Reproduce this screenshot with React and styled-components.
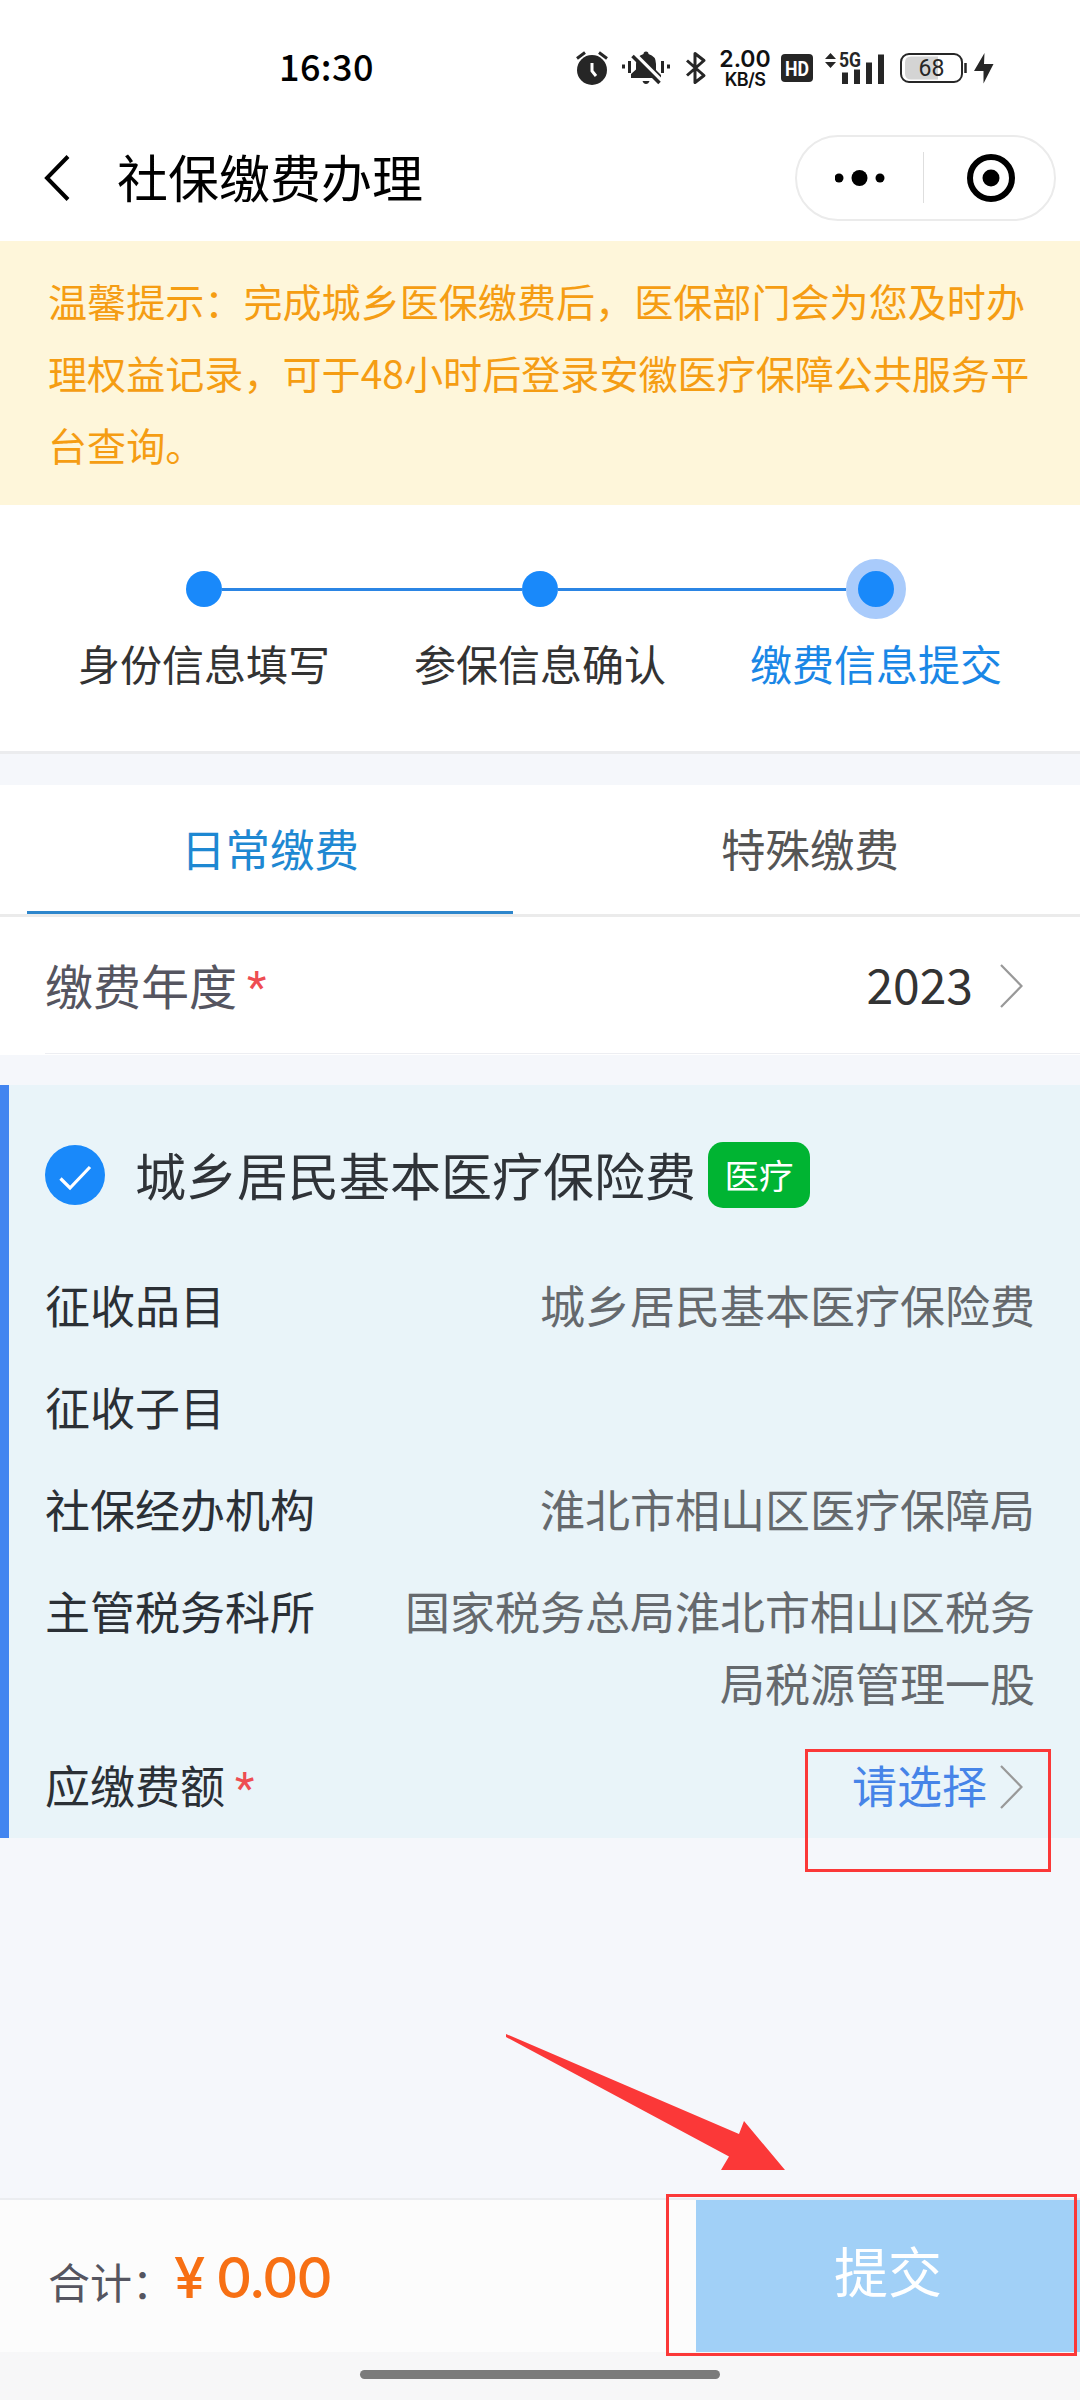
import React from 'react'
import styled, { createGlobalStyle } from 'styled-components'

const GlobalStyle = createGlobalStyle`
  * {
    box-sizing: border-box;
  }
  body {
    margin: 0;
    background: #f5f7fa;
    font-family: 'Noto Sans CJK SC', sans-serif;
    color: #333;
  }
  svg {
    display: block;
    flex: none;
  }
`

const Screen = styled.div`
  position: relative;
  display: flex;
  flex-direction: column;
  width: 1080px;
  height: 2400px;
  overflow: hidden;
  background: #f5f7fb;
`

const StatusBar = styled.div`
  display: flex;
  align-items: center;
  height: 136px;
  padding: 0 86px 0 279px;
  background: #fff;
`

const Clock = styled.div`
  padding-bottom: 6px;
  font-size: 36px;
  line-height: 36px;
  font-weight: 500;
  letter-spacing: 0.4px;
  color: #000;
`

const StatusIcons = styled.div`
  display: flex;
  align-items: center;
  margin-left: auto;
`

const NetSpeed = styled.div`
  display: flex;
  flex-direction: column;
  align-items: center;
  width: 54px;
  margin: 0 9px 0 11px;
  padding-top: 2px;
  color: #111;
  font-family: Inter, sans-serif;
  font-weight: 600;
  font-size: 23px;
  line-height: 21px;
  small {
    font-size: 18px;
    line-height: 20px;
    letter-spacing: -0.6px;
  }
`

const NavBar = styled.div`
  display: flex;
  align-items: center;
  height: 105px;
  padding: 0 24px 22px 43px;
  background: #fff;
`

const NavTitle = styled.div`
  margin-left: 46px;
  padding-bottom: 4px;
  font-size: 51px;
  line-height: 60px;
  color: #000;
`

const Capsule = styled.div`
  display: flex;
  align-items: center;
  width: 261px;
  height: 86px;
  margin-left: auto;
  border: 2px solid #ebebeb;
  border-radius: 43px;
`

const CapsuleHalf = styled.div`
  display: flex;
  flex: 1;
  align-items: center;
  justify-content: center;
  padding-left: ${p => p.$shift || 0}px;
`

const CapsuleDivider = styled.div`
  width: 1px;
  height: 51px;
  background: #dedede;
`

const Notice = styled.div`
  height: 264px;
  padding: 23px 0 0 48px;
  background: #fef6da;
  color: #f59d13;
  font-size: 39.1px;
  line-height: 72px;
  white-space: pre;
`

const Steps = styled.div`
  display: flex;
  height: 249px;
  padding: 54px 36px 0;
  background: #fff;
  border-bottom: 3px solid #ebecee;
`

const Step = styled.div`
  display: flex;
  flex: 1;
  flex-direction: column;
  align-items: center;
  font-size: 42px;
  line-height: 60px;
  color: ${p => (p.$active ? '#1a87e6' : '#333')};
`

const StepTrack = styled.div`
  display: flex;
  align-items: center;
  align-self: stretch;
  height: 60px;
  margin-bottom: 14px;
`

const StepLine = styled.div`
  flex: 1;
  height: 3px;
  background: ${p => (p.$hidden ? 'transparent' : '#2b85e4')};
`

const StepDot = styled.div`
  width: ${p => (p.$active ? 60 : 36)}px;
  height: ${p => (p.$active ? 60 : 36)}px;
  border: ${p => (p.$active ? '12px solid #a9cbfb' : 'none')};
  border-radius: 50%;
  background: #1989fa;
`

const Tabs = styled.div`
  display: flex;
  height: 132px;
  margin-top: 31px;
  background: #fff;
  border-bottom: 3px solid #ebebeb;
`

const Tab = styled.div`
  display: flex;
  flex: 1;
  flex-direction: column;
  align-items: center;
  padding: 33px 27px 0;
  font-size: 44.5px;
  line-height: 60px;
  color: ${p => (p.$active ? '#1e88d2' : '#555')};
  &::after {
    content: '';
    align-self: stretch;
    height: 3px;
    margin-top: auto;
    background: ${p => (p.$active ? '#2d86cc' : 'transparent')};
  }
`

const YearRow = styled.div`
  display: flex;
  align-items: center;
  height: 138px;
  padding: 0 57px 0 45px;
  background: linear-gradient(#edeef2, #edeef2) 45px 136px / 100% 1px no-repeat #fff;
  font-size: 48px;
  line-height: 60px;
  color: #555560;
`

const YearLabel = styled.span`
  padding-bottom: 4px;
`

const YearValue = styled.span`
  margin: 0 27px 0 auto;
  padding-bottom: 6px;
  color: #333;
`

const Required = styled.span`
  margin-left: 10px;
  padding-top: 3px;
  font-family: Roboto, sans-serif;
  font-size: 45px;
  color: #ee4d52;
`

const Card = styled.div`
  height: 753px;
  margin-top: 30px;
  padding-left: 36px;
  border-left: 9px solid #4285f0;
  background: #e9f4f9;
`

const CardHead = styled.div`
  display: flex;
  align-items: center;
  height: 184px;
  padding-bottom: 4px;
`

const CardTitle = styled.div`
  margin: 0 12px 0 30px;
  padding-bottom: 3px;
  font-size: 51px;
  line-height: 60px;
  color: #2f3338;
`

const Tag = styled.div`
  width: 102px;
  height: 66px;
  border-radius: 15px;
  background: #00b432;
  color: #fff;
  font-size: 34.5px;
  line-height: 65px;
  text-align: center;
`

const Field = styled.div`
  display: flex;
  align-items: flex-start;
  justify-content: space-between;
  padding-right: ${p => (p.$link ? 57 : 45)}px;
  margin-bottom: 30px;
  font-size: 45px;
  line-height: 72px;
  color: #2b3036;
`

const FieldValue = styled.div`
  width: 640px;
  min-height: 72px;
  color: #65696d;
  text-align: right;
`

const Picker = styled.div`
  display: flex;
  align-items: center;
  gap: 13px;
  color: #4684e8;
  svg {
    margin-top: 3px;
  }
`

const Footer = styled.div`
  display: flex;
  align-items: center;
  height: 154px;
  margin-top: auto;
  border-top: 2px solid #ebedf0;
  background: #fcfcfc;
`

const TotalLabel = styled.div`
  padding: 9px 0 0 48px;
  font-size: 42px;
  line-height: 60px;
  color: #555560;
`

const TotalPrice = styled.div`
  padding-top: 3px;
  font-family: Inter, sans-serif;
  font-size: 56px;
  line-height: 60px;
  font-weight: 500;
  letter-spacing: -2px;
  color: #f77014;
`

const SubmitButton = styled.button`
  width: 384px;
  height: 152px;
  margin-left: auto;
  padding: 0 0 13px;
  border: 0;
  background: #a1d0f7;
  color: #fff;
  font: 54px / 60px 'Noto Sans CJK SC', sans-serif;
`

const HomeArea = styled.div`
  height: 48px;
  padding-top: 18px;
  background: #f7f7f8;
`

const HomeBar = styled.div`
  width: 360px;
  height: 9px;
  margin: 0 auto;
  border-radius: 5px;
  background: #7b7b7b;
`

// hand-drawn marks lying over the page
const MarkBox = styled.div`
  position: absolute;
  left: ${p => p.$x}px;
  top: ${p => p.$y}px;
  width: ${p => p.$w}px;
  height: ${p => p.$h}px;
  border: 3px solid #fb3838;
`

const MarkArrow = styled.svg`
  position: absolute;
  left: 506px;
  top: 2034px;
`

const MuteSvg = styled.svg`
  margin-left: 13px;
`

const BluetoothSvg = styled.svg`
  margin-left: 14px;
`

const SignalSvg = styled.svg`
  margin-left: 11px;
`

const BatterySvg = styled.svg`
  margin-left: 14px;
`

const BoltSvg = styled.svg`
  margin-left: 6px;
`

const ink = '#262626'

const AlarmIcon = () => (
  <svg width="32" height="36" viewBox="0 0 32 36">
    <circle cx="16" cy="20" r="15" fill={ink} />
    <path d="M1 8.500 9 2.500M31 8.500 23 2.500" stroke={ink} strokeWidth="3" />
    <path d="M16 13v8l4 5" fill="none" stroke="#fff" strokeWidth="3" />
  </svg>
)

const MuteIcon = () => (
  <MuteSvg width="50" height="36" viewBox="0 0 50 36">
    <path d="M1 14.500h3v4H1zM7 11h3v12H7zM40 11h3v12h-3zM46 14.500h3v4h-3z" fill={ink} />
    <path d="M22.500 4q0-2.500 2.500-2.500T27.500 4q7.500 2 7.500 10v6l5 5v3H10v-4l5-4.500V14q0-8 7.500-10zM21.500 31h7q-1 3-3.500 3t-3.500-3z" fill={ink} />
    <path d="M13.500 3.500 42 32" stroke="#fff" strokeWidth="3.500" />
    <path d="M11.500 6 38.500 33" stroke={ink} strokeWidth="3.500" />
  </MuteSvg>
)

const BluetoothIcon = () => (
  <BluetoothSvg width="22" height="36" viewBox="0 0 22 36">
    <path d="M2 10.500 19 25.500 10 32.500V3.500l9 7L2 25.500" fill="none" stroke={ink} strokeWidth="3" strokeLinejoin="round" />
  </BluetoothSvg>
)

const HdIcon = () => (
  <svg width="32" height="28" viewBox="0 0 32 28">
    <rect width="32" height="28" rx="4" fill={ink} />
    <text x="16" y="21.500" textAnchor="middle" textLength="24" lengthAdjust="spacingAndGlyphs" fontFamily="Roboto" fontWeight="700" fontSize="21" fill="#fff">HD</text>
  </svg>
)

const SignalIcon = () => (
  <SignalSvg width="62" height="48" viewBox="0 -6 62 48">
    <path d="M1 9 6.500 3 12 9zM1 12h11l-5.500 6z" fill={ink} />
    <text x="15" y="17" textLength="22" lengthAdjust="spacingAndGlyphs" fontFamily="Roboto" fontWeight="700" fontSize="20" fill={ink}>5G</text>
    <path d="M18 22.500h6V34h-6zM30 19.500h6V34h-6zM42 12.500h6V34h-6zM54 4.500h6V34h-6z" fill={ink} />
  </SignalSvg>
)

const BatteryIcon = () => (
  <BatterySvg width="68" height="36" viewBox="0 0 68 36">
    <rect x="1" y="4" width="61" height="28" rx="8" fill="#fff" stroke={ink} strokeWidth="2" />
    <path d="M11 6.500h27v23H11q-6 0-6-6v-11q0-6 6-6z" fill="#d4d4d4" />
    <path d="M65.500 13v10" stroke={ink} strokeWidth="2.500" />
    <text x="31.500" y="26" textAnchor="middle" fontFamily="Roboto" fontSize="23" fill={ink}>68</text>
  </BatterySvg>
)

const BoltIcon = () => (
  <BoltSvg width="20" height="36" viewBox="0 0 20 36">
    <path d="M10.500 3 0 21h9.500v12.500L19.500 14H10z" fill={ink} />
  </BoltSvg>
)

const Chevron = () => (
  <svg width="23" height="44" viewBox="0 0 23 44">
    <path d="M1 1 21.500 22 1 43" fill="none" stroke="#999" strokeWidth="2.200" />
  </svg>
)

const fields = [
  ['征收品目', '城乡居民基本医疗保险费'],
  ['征收子目', ''],
  ['社保经办机构', '淮北市相山区医疗保障局'],
  ['主管税务科所', '国家税务总局淮北市相山区税务局税源管理一股']
]

const steps = ['身份信息填写', '参保信息确认', '缴费信息提交']

export default function App () {
  return (
    <Screen>
      <GlobalStyle />
      <StatusBar>
        <Clock>16:30</Clock>
        <StatusIcons>
          <AlarmIcon />
          <MuteIcon />
          <BluetoothIcon />
          <NetSpeed>2.00<small>KB/S</small></NetSpeed>
          <HdIcon />
          <SignalIcon />
          <BatteryIcon />
          <BoltIcon />
        </StatusIcons>
      </StatusBar>

      <NavBar>
        <svg width="28" height="48" viewBox="0 0 28 48">
          <path d="M25 2.500 4 24l21 21.500" fill="none" stroke="#000" strokeWidth="4" />
        </svg>
        <NavTitle>社保缴费办理</NavTitle>
        <Capsule>
          <CapsuleHalf>
            <svg width="50" height="16" viewBox="0 0 50 16">
              <circle cx="4" cy="8" r="4.500" />
              <circle cx="24.500" cy="8" r="8" />
              <circle cx="45" cy="8" r="4.500" />
            </svg>
          </CapsuleHalf>
          <CapsuleDivider />
          <CapsuleHalf $shift={5}>
            <svg width="48" height="48" viewBox="0 0 48 48">
              <circle cx="24" cy="24" r="21" fill="none" stroke="#000" strokeWidth="6" />
              <circle cx="24" cy="24" r="8.500" />
            </svg>
          </CapsuleHalf>
        </Capsule>
      </NavBar>

      <Notice>
        {'温馨提示：完成城乡医保缴费后，医保部门会为您及时办\n理权益记录，可于48小时后登录安徽医疗保障公共服务平\n台查询。'}
      </Notice>

      <Steps>
        {steps.map((name, i) => (
          <Step key={name} $active={i === 2}>
            <StepTrack>
              <StepLine $hidden={i === 0} />
              <StepDot $active={i === 2} />
              <StepLine $hidden={i === 2} />
            </StepTrack>
            {name}
          </Step>
        ))}
      </Steps>

      <Tabs>
        <Tab $active>日常缴费</Tab>
        <Tab>特殊缴费</Tab>
      </Tabs>

      <YearRow>
        <YearLabel>缴费年度</YearLabel>
        <Required>*</Required>
        <YearValue>2023</YearValue>
        <Chevron />
      </YearRow>

      <Card>
        <CardHead>
          <svg width="60" height="60" viewBox="0 0 60 60">
            <circle cx="30" cy="30" r="30" fill="#1989fa" />
            <path d="M15.500 33.500 25 43 45 22" fill="none" stroke="#fff" strokeWidth="3.200" />
          </svg>
          <CardTitle>城乡居民基本医疗保险费</CardTitle>
          <Tag>医疗</Tag>
        </CardHead>
        {fields.map(([label, value]) => (
          <Field key={label}>
            {label}
            <FieldValue>{value}</FieldValue>
          </Field>
        ))}
        <Field $link>
          <div>应缴费额<Required>*</Required></div>
          <Picker>请选择<Chevron /></Picker>
        </Field>
      </Card>

      <Footer>
        <TotalLabel>合计：</TotalLabel>
        <TotalPrice>¥ 0.00</TotalPrice>
        <SubmitButton>提交</SubmitButton>
      </Footer>
      <HomeArea>
        <HomeBar />
      </HomeArea>

      <MarkBox $x={805} $y={1749} $w={246} $h={123} />
      <MarkBox $x={666} $y={2194} $w={411} $h={162} />
      <MarkArrow width="280" height="137" viewBox="0 0 280 137">
        <path d="M0 0 233 100 238 87 279 136H215L223 122.500 0 3z" fill="#fb3838" />
      </MarkArrow>
    </Screen>
  )
}
